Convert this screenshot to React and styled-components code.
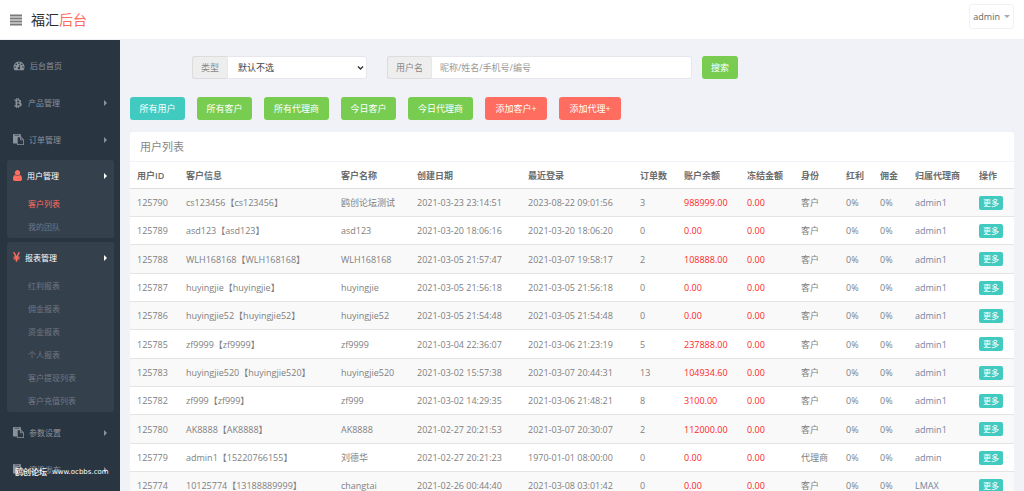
import React, { useState } from 'react';
import styled, { createGlobalStyle, css } from 'styled-components';
import { FaBtc } from 'react-icons/fa';

const GlobalStyle = createGlobalStyle`
  * {
    box-sizing: border-box;
  }

  body {
    margin: 0;
    background: #f1f2f7;
    color: #808080;
    font-family: 'Open Sans', 'Noto Sans CJK SC', sans-serif;
    font-size: 9px;
    line-height: 13px;
  }

  button, input, select {
    font: inherit;
  }

  a {
    color: inherit;
    text-decoration: none;
  }

  ul {
    list-style: none;
    margin: 0;
    padding: 0;
  }
`;

const Page = styled.div`
  display: flex;
  flex-direction: column;
  height: 100vh;
`;

const TopBar = styled.header`
  display: flex;
  align-items: center;
  flex: none;
  height: 40px;
  padding: 0 10px;
  background: #fff;
  border-bottom: 1px solid #f1f2f7;
`;

const MenuToggle = styled.button`
  display: flex;
  padding: 0;
  border: none;
  background: none;
  color: #797979;
  cursor: pointer;
`;

const Logo = styled.a`
  margin-left: 9px;
  color: #2e2e2e;
  font-size: 14px;
  line-height: 20px;

  span {
    color: #ff6c60;
  }
`;

const UserMenu = styled.button`
  display: flex;
  align-items: center;
  gap: 4px;
  height: 25px;
  margin: 0 0 7px auto;
  padding: 0 3px;
  border: 1px solid #f1f2f7;
  border-radius: 3px;
  background: #fff;
  color: #666;
  cursor: pointer;
`;

const Caret = styled.span`
  border: 3px solid transparent;
  border-top-color: #a4aab2;
  border-bottom: none;
`;

const Body = styled.div`
  display: flex;
  flex: 1;
  min-height: 0;
`;

const Sidebar = styled.nav`
  position: relative;
  flex: none;
  width: 120px;
  padding: 9px 6px 0 7px;
  background: #2a3542;
  overflow: hidden;
`;

const MenuGroup = styled.li`
  margin-bottom: 4px;
  border-radius: 3px;
  background: ${({ $open }) => ($open ? '#35404d' : 'transparent')};
`;

const MenuLink = styled.a`
  display: flex;
  align-items: center;
  gap: 5px;
  height: ${({ $open }) => ($open ? '31px' : '33px')};
  padding: 0 7px 0 6px;
  color: ${({ $open }) => ($open ? '#fff' : '#8a929b')};
  font-size: 8px;

  svg {
    flex: none;
    color: ${({ $open }) => ($open ? '#ff6c60' : '#8a929b')};
  }
`;

const Arrow = styled.span`
  margin-left: auto;
  border: 3px solid transparent;
  border-left-color: currentColor;
  border-right: none;
`;

const SubMenu = styled.ul`
  padding-top: 1px;
`;

const SubLink = styled.a`
  display: block;
  padding-left: 21px;
  color: ${({ $active }) => ($active ? '#ff6c60' : '#6f7883')};
  font-size: 8px;
  line-height: 23px;
`;

const Watermark = styled.div`
  position: absolute;
  top: 426px;
  left: 15px;
  display: flex;
  gap: 5px;
  color: #fff;
  font-family: 'DejaVu Sans', 'Noto Sans CJK SC', sans-serif;
  font-size: 7px;
  white-space: nowrap;

  b {
    font-size: 8px;
    font-weight: 500;
  }
`;

const Content = styled.main`
  flex: 1;
  min-width: 0;
  padding: 16px 10px;
  overflow: auto;
  scrollbar-width: none;
`;

const SearchForm = styled.form`
  display: grid;
  grid-template-columns: 175fr 351fr;
  gap: 20px;
  padding: 0 276px 0 62px;
`;

const SearchPart = styled.div`
  display: flex;
  gap: 10px;
`;

const InputGroup = styled.div`
  position: relative;
  display: flex;
  flex: 1;
  min-width: 0;
  height: 23px;
`;

const Addon = styled.label`
  display: flex;
  align-items: center;
  flex: none;
  padding: 0 8px;
  border: 1px solid #dcdcdc;
  border-right: none;
  border-radius: 3px 0 0 3px;
  background: #eee;
  color: #888;
`;

const field = css`
  flex: 1;
  min-width: 0;
  border: 1px solid #e6e7ec;
  border-radius: 0 3px 3px 0;
  background: #fff;
  color: #444;
  outline: none;
`;

const Select = styled.select`
  ${field}
  padding: 0 16px 0 10px;
  appearance: none;
`;

const SelectArrow = styled.svg`
  position: absolute;
  top: 9px;
  right: 3px;
  pointer-events: none;
`;

const Input = styled.input`
  ${field}
  padding: 0 8px;

  &::placeholder {
    color: #999;
  }
`;

const colors = {
  teal: '#41cac0',
  green: '#78cd51',
  red: '#ff6c60',
};

const Button = styled.button`
  flex: none;
  width: ${({ $width }) => $width}px;
  height: 23px;
  padding: 0;
  border: none;
  border-radius: 3px;
  background: ${({ $color }) => colors[$color]};
  color: #fff;
  white-space: nowrap;
  cursor: pointer;
`;

const Filters = styled.div`
  display: flex;
  gap: 12px;
  margin: 18px 0 12px;
`;

const Panel = styled.section`
  border-radius: 3px;
  background: #fff;
  overflow: hidden;
`;

const PanelTitle = styled.h2`
  margin: 0;
  padding: 0 10px;
  border-bottom: 1px solid #eff2f7;
  color: #888;
  font-size: 11px;
  font-weight: 400;
  line-height: 29px;
`;

const Table = styled.table`
  width: 100%;
  table-layout: fixed;
  border-collapse: separate;
  border-spacing: 0;

  th, td {
    padding: 0 0 0 7px;
    text-align: left;
    white-space: nowrap;
  }

  th {
    height: 27px;
    border-bottom: 1px solid #ddd;
    color: #6c6c6c;
    font-weight: 600;
  }

  td {
    height: 28px;
    border-bottom: 1px solid #e4e4e4;
  }

  tbody tr:nth-child(3n) td {
    height: 29px;
  }

  tbody tr:nth-child(odd) td {
    background: #f9f9f9;
  }
`;

const Money = styled.span`
  color: #ff1f1f;
`;

const AgentLink = styled.a`
  color: #7385a0;
`;

const MoreButton = styled.button`
  display: block;
  width: 24px;
  height: 14px;
  padding: 0;
  border: none;
  border-radius: 2px;
  background: #41cac0;
  color: #fff;
  font-size: 8px;
  line-height: 14px;
  cursor: pointer;
`;

const icons = {
  dashboard: {
    box: '0 0 1792 1792',
    width: 12,
    path: 'M384 1152q0-53-37.5-90.5t-90.5-37.5-90.5 37.5-37.5 90.5 37.5 90.5 90.5 37.5 90.5-37.5 37.5-90.5zm192-448q0-53-37.5-90.5t-90.5-37.5-90.5 37.5-37.5 90.5 37.5 90.5 90.5 37.5 90.5-37.5 37.5-90.5zm428 481l101-382q6-26-7.5-48.5t-38.5-29.5-48 6.5-30 39.5l-101 382q-60 5-107 43.5t-63 98.5q-20 77 20 146t117 89 146-20 89-117q16-60-6-117t-72-91zm660-33q0-53-37.5-90.5t-90.5-37.5-90.5 37.5-37.5 90.5 37.5 90.5 90.5 37.5 90.5-37.5 37.5-90.5zm-640-640q0-53-37.5-90.5t-90.5-37.5-90.5 37.5-37.5 90.5 37.5 90.5 90.5 37.5 90.5-37.5 37.5-90.5zm448 192q0-53-37.5-90.5t-90.5-37.5-90.5 37.5-37.5 90.5 37.5 90.5 90.5 37.5 90.5-37.5 37.5-90.5zm320 448q0 261-141 483-19 29-54 29h-1402q-35 0-54-29-141-221-141-483 0-182 71-348t191-286 286-191 348-71 348 71 286 191 191 286 71 348z',
  },
  paste: {
    box: '0 0 1792 1792',
    width: 11,
    path: 'M768 1664h896v-640h-416q-40 0-68-28t-28-68v-416h-384v1152zm256-1440v-64q0-13-9.5-22.5t-22.5-9.5h-704q-13 0-22.5 9.5t-9.5 22.5v64q0 13 9.5 22.5t22.5 9.5h704q13 0 22.5-9.5t9.5-22.5zm256 672h299l-299-299v299zm512 128v672q0 40-28 68t-68 28h-960q-40 0-68-28t-28-68v-160h-544q-40 0-68-28t-28-68v-1344q0-40 28-68t68-28h1088q40 0 68 28t28 68v328q21 13 36 28l408 408q28 28 48 76t20 88z',
  },
  user: {
    box: '0 128 1280 1536',
    width: 9,
    path: 'M1280 1399q0 109-62.5 187t-150.5 78h-854q-88 0-150.5-78t-62.5-187q0-85 8.5-160.5t31.5-152 58.5-131 94-89 134.5-34.5q131 128 313 128t313-128q76 0 134.5 34.5t94 89 58.5 131 31.5 152 8.5 160.5zm-256-887q0 159-112.5 271.5t-271.5 112.5-271.5-112.5-112.5-271.5 112.5-271.5 271.5-112.5 271.5 112.5 112.5 271.5z',
  },
  yen: {
    box: '382 256 1028 1280',
    width: 7,
    path: 'M985.5 1536h-172q-13 0-22.5-9t-9.5-23v-330h-288q-13 0-22.5-9t-9.5-23v-103q0-13 9.5-22.5t22.5-9.5h288v-85h-288q-13 0-22.5-9t-9.5-23v-104q0-13 9.5-22.5t22.5-9.5h214l-321-578q-8-16 0-32 10-16 28-16h194q19 0 29 18l215 425q19 38 56 125 10-24 30.5-68t27.5-61l191-420q8-19 29-19h191q17 0 27 16 9 14 1 31l-313 579h215q13 0 22.5 9.5t9.5 22.5v104q0 14-9.5 23t-22.5 9h-290v85h290q13 0 22.5 9.5t9.5 22.5v103q0 14-9.5 23t-22.5 9h-290v330q0 13-9.5 22.5t-22.5 9.5z',
  },
};

const Icon = ({ name }) => {
  if (name === 'btc') {
    return <FaBtc size={10} />;
  }
  const { box, width, path } = icons[name];
  return (
    <svg width={width} height="11" viewBox={box} fill="currentColor" aria-hidden="true">
      <path d={path} />
    </svg>
  );
};

const menu = [
  { icon: 'dashboard', label: '后台首页' },
  { icon: 'btc', label: '产品管理', arrow: true },
  { icon: 'paste', label: '订单管理', arrow: true },
  { icon: 'user', label: '用户管理', arrow: true, items: ['客户列表', '我的团队'] },
  {
    icon: 'yen',
    label: '报表管理',
    arrow: true,
    items: ['红利报表', '佣金报表', '资金报表', '个人报表', '客户提现列表', '客户充值列表'],
  },
  { icon: 'paste', label: '参数设置', arrow: true },
  { icon: 'paste', label: '资讯发布', arrow: true },
];

const filters = [
  { label: '所有用户', color: 'teal', width: 55 },
  { label: '所有客户', color: 'green', width: 55 },
  { label: '所有代理商', color: 'green', width: 65 },
  { label: '今日客户', color: 'green', width: 55 },
  { label: '今日代理商', color: 'green', width: 65 },
  { label: '添加客户+', color: 'red', width: 62 },
  { label: '添加代理+', color: 'red', width: 62 },
];

const columns = [
  ['用户ID', 49],
  ['客户信息', 155],
  ['客户名称', 76],
  ['创建日期', 111],
  ['最近登录', 112],
  ['订单数', 44],
  ['账户余额', 63],
  ['冻结金额', 54],
  ['身份', 45],
  ['红利', 34],
  ['佣金', 35],
  ['归属代理商', 64],
  ['操作', 42],
];

const users = [
  ['125790', 'cs123456【cs123456】', '鸥创论坛测试', '2021-03-23 23:14:51', '2023-08-22 09:01:56', '3', '988999.00', '客户', 'admin1'],
  ['125789', 'asd123【asd123】', 'asd123', '2021-03-20 18:06:16', '2021-03-20 18:06:20', '0', '0.00', '客户', 'admin1'],
  ['125788', 'WLH168168【WLH168168】', 'WLH168168', '2021-03-05 21:57:47', '2021-03-07 19:58:17', '2', '108888.00', '客户', 'admin1'],
  ['125787', 'huyingjie【huyingjie】', 'huyingjie', '2021-03-05 21:56:18', '2021-03-05 21:56:18', '0', '0.00', '客户', 'admin1'],
  ['125786', 'huyingjie52【huyingjie52】', 'huyingjie52', '2021-03-05 21:54:48', '2021-03-05 21:54:48', '0', '0.00', '客户', 'admin1'],
  ['125785', 'zf9999【zf9999】', 'zf9999', '2021-03-04 22:36:07', '2021-03-06 21:23:19', '5', '237888.00', '客户', 'admin1'],
  ['125783', 'huyingjie520【huyingjie520】', 'huyingjie520', '2021-03-02 15:57:38', '2021-03-07 20:44:31', '13', '104934.60', '客户', 'admin1'],
  ['125782', 'zf999【zf999】', 'zf999', '2021-03-02 14:29:35', '2021-03-06 21:48:21', '8', '3100.00', '客户', 'admin1'],
  ['125780', 'AK8888【AK8888】', 'AK8888', '2021-02-27 20:21:53', '2021-03-07 20:30:07', '2', '112000.00', '客户', 'admin1'],
  ['125779', 'admin1【15220766155】', '刘德华', '2021-02-27 20:21:23', '1970-01-01 08:00:00', '0', '0.00', '代理商', 'admin'],
  ['125774', '10125774【13188889999】', 'changtai', '2021-02-26 00:44:40', '2021-03-08 03:01:42', '0', '0.00', '客户', 'LMAX'],
];

const UserRow = ({ user }) => {
  const [id, info, name, created, lastLogin, orders, balance, role, agent] = user;
  return (
    <tr>
      <td>{id}</td>
      <td>{info}</td>
      <td>{name}</td>
      <td>{created}</td>
      <td>{lastLogin}</td>
      <td>{orders}</td>
      <td><Money>{balance}</Money></td>
      <td><Money>0.00</Money></td>
      <td>{role}</td>
      <td>0%</td>
      <td>0%</td>
      <td><AgentLink href="#">{agent}</AgentLink></td>
      <td><MoreButton type="button">更多</MoreButton></td>
    </tr>
  );
};

const App = () => {
  const [keyword, setKeyword] = useState('');

  return (
    <Page>
      <GlobalStyle />
      <TopBar>
        <MenuToggle type="button" aria-label="菜单">
          <svg width="12" height="12" viewBox="0 0 12 12" fill="currentColor">
            <path d="M0 .6h12v1.8H0zM0 3.6h12v1.8H0zM0 6.6h12v1.8H0zM0 9.6h12v1.8H0z" />
          </svg>
        </MenuToggle>
        <Logo href="#">福汇<span>后台</span></Logo>
        <UserMenu type="button">
          admin
          <Caret />
        </UserMenu>
      </TopBar>
      <Body>
        <Sidebar>
          <ul>
            {menu.map(({ icon, label, arrow, items }) => (
              <MenuGroup key={label} $open={!!items}>
                <MenuLink href="#" $open={!!items}>
                  <Icon name={icon} />
                  {label}
                  {arrow && <Arrow />}
                </MenuLink>
                {items && (
                  <SubMenu>
                    {items.map((item) => (
                      <li key={item}>
                        <SubLink href="#" $active={item === '客户列表'}>{item}</SubLink>
                      </li>
                    ))}
                  </SubMenu>
                )}
              </MenuGroup>
            ))}
          </ul>
          <Watermark>
            <b>鸥创论坛</b>
            <span>www.ocbbs.com</span>
          </Watermark>
        </Sidebar>
        <Content>
          <SearchForm onSubmit={(e) => e.preventDefault()}>
            <SearchPart>
              <InputGroup>
                <Addon htmlFor="type">类型</Addon>
                <Select id="type">
                  <option>默认不选</option>
                  <option>客户</option>
                  <option>代理商</option>
                </Select>
                <SelectArrow width="7" height="6" viewBox="0 0 7 6" fill="none" stroke="#333" strokeWidth="1.4">
                  <path d="M1 1.5l2.5 2.5L6 1.5" />
                </SelectArrow>
              </InputGroup>
            </SearchPart>
            <SearchPart>
              <InputGroup>
                <Addon htmlFor="username">用户名</Addon>
                <Input
                  id="username"
                  type="text"
                  placeholder="昵称/姓名/手机号/编号"
                  value={keyword}
                  onChange={(e) => setKeyword(e.target.value)}
                />
              </InputGroup>
              <Button type="submit" $color="green" $width={36}>搜索</Button>
            </SearchPart>
          </SearchForm>
          <Filters>
            {filters.map(({ label, color, width }) => (
              <Button key={label} type="button" $color={color} $width={width}>{label}</Button>
            ))}
          </Filters>
          <Panel>
            <PanelTitle>用户列表</PanelTitle>
            <Table>
              <colgroup>
                {columns.map(([label, width]) => (
                  <col key={label} style={{ width }} />
                ))}
              </colgroup>
              <thead>
                <tr>
                  {columns.map(([label]) => (
                    <th key={label} scope="col">{label}</th>
                  ))}
                </tr>
              </thead>
              <tbody>
                {users.map((user) => (
                  <UserRow key={user[0]} user={user} />
                ))}
              </tbody>
            </Table>
          </Panel>
        </Content>
      </Body>
    </Page>
  );
};

export default App;
